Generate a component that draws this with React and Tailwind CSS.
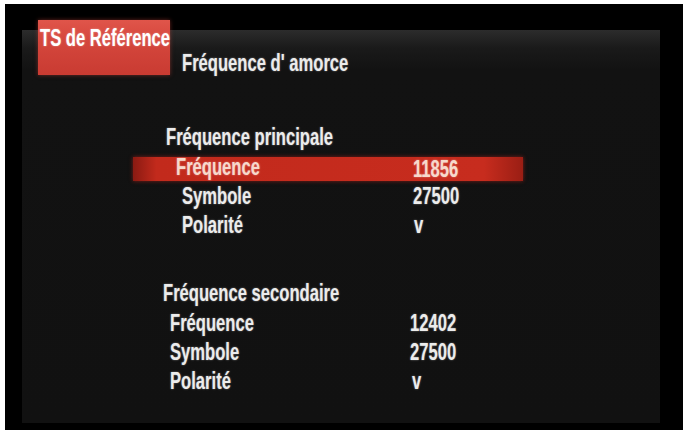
import React from "react";

const font = { fontFamily: '"Liberation Sans", Arial, sans-serif' };

function T({ children, className = "" }) {
  return (
    <span className={`inline-block origin-left scale-x-[0.83] scale-y-[1.18] font-bold whitespace-nowrap text-[20px] leading-none [text-shadow:0_0_2px_rgba(255,255,255,0.45)] ${className}`}>
      {children}
    </span>
  );
}

function Row({ label, value, labelX, valueX, active }) {
  return (
    <div className="h-[29px] flex items-center">
      {active ? (
        <div className="ml-[111px] w-[390px] h-[24px] flex items-center bg-[linear-gradient(90deg,#8a1a12_0%,#c22a1c_6%,#c72c1e_90%,#9a1e14_100%)] shadow-[0_0_4px_rgba(200,40,30,0.6)]">
          <div style={{ width: valueX - 133 }} className="shrink-0 flex">
            <div style={{ marginLeft: labelX - 133 }}>
              <T className="text-[#f7d9cc]">{label}</T>
            </div>
          </div>
          <T className="text-[#f7d9cc]">{value}</T>
        </div>
      ) : (
        <div className="flex">
          <div style={{ width: valueX - 22 }} className="shrink-0 flex">
            <div style={{ marginLeft: labelX - 22 }}>
              <T className="text-[#ececec]">{label}</T>
            </div>
          </div>
          <T className="text-[#ececec]">{value}</T>
        </div>
      )}
    </div>
  );
}

export default function App() {
  return (
    <div style={font} className="w-[687px] h-[434px] bg-white pt-[4px] pl-[5px] pr-[4px] pb-[4px] flex overflow-hidden">
      <div className="flex-1 bg-black pt-[26px] pl-[17px] pr-[23px] pb-[7px] flex">
        <div className="flex-1 bg-[linear-gradient(180deg,#2c2c2c_0px,#1a1a1a_18px,#121212_40px,#111111_100%)] flex flex-col">
          {/* header */}
          <div className="-mt-[10px] flex items-end">
            <div className="ml-[16px] w-[132px] h-[55px] bg-[linear-gradient(180deg,#e0554a_0%,#d4463c_40%,#c93b32_100%)] pl-[2px] pt-[8px] shadow-[0_0_4px_rgba(210,70,60,0.5)]">
              <T className="text-white">TS de Référence</T>
            </div>
            <div className="ml-[12px] -mb-[2px]">
              <T className="text-[#ececec]">Fréquence d' amorce</T>
            </div>
          </div>

          {/* principale */}
          <div className="mt-[47px] h-[29px] flex items-center pl-[144px]">
            <T className="text-[#ececec]">Fréquence principale</T>
          </div>
          <div className="mt-[3px]">
            <Row label="Fréquence" value="11856" labelX={176} valueX={413} active />
            <Row label="Symbole" value="27500" labelX={182} valueX={413} />
            <Row label="Polarité" value="v" labelX={182} valueX={414} />
          </div>

          {/* secondaire */}
          <div className="mt-[37px] h-[29px] flex items-center pl-[141px]">
            <T className="text-[#ececec]">Fréquence secondaire</T>
          </div>
          <div className="mt-[3px]">
            <Row label="Fréquence" value="12402" labelX={170} valueX={410} />
            <Row label="Symbole" value="27500" labelX={170} valueX={410} />
            <Row label="Polarité" value="v" labelX={170} valueX={412} />
          </div>
        </div>
      </div>
    </div>
  );
}
